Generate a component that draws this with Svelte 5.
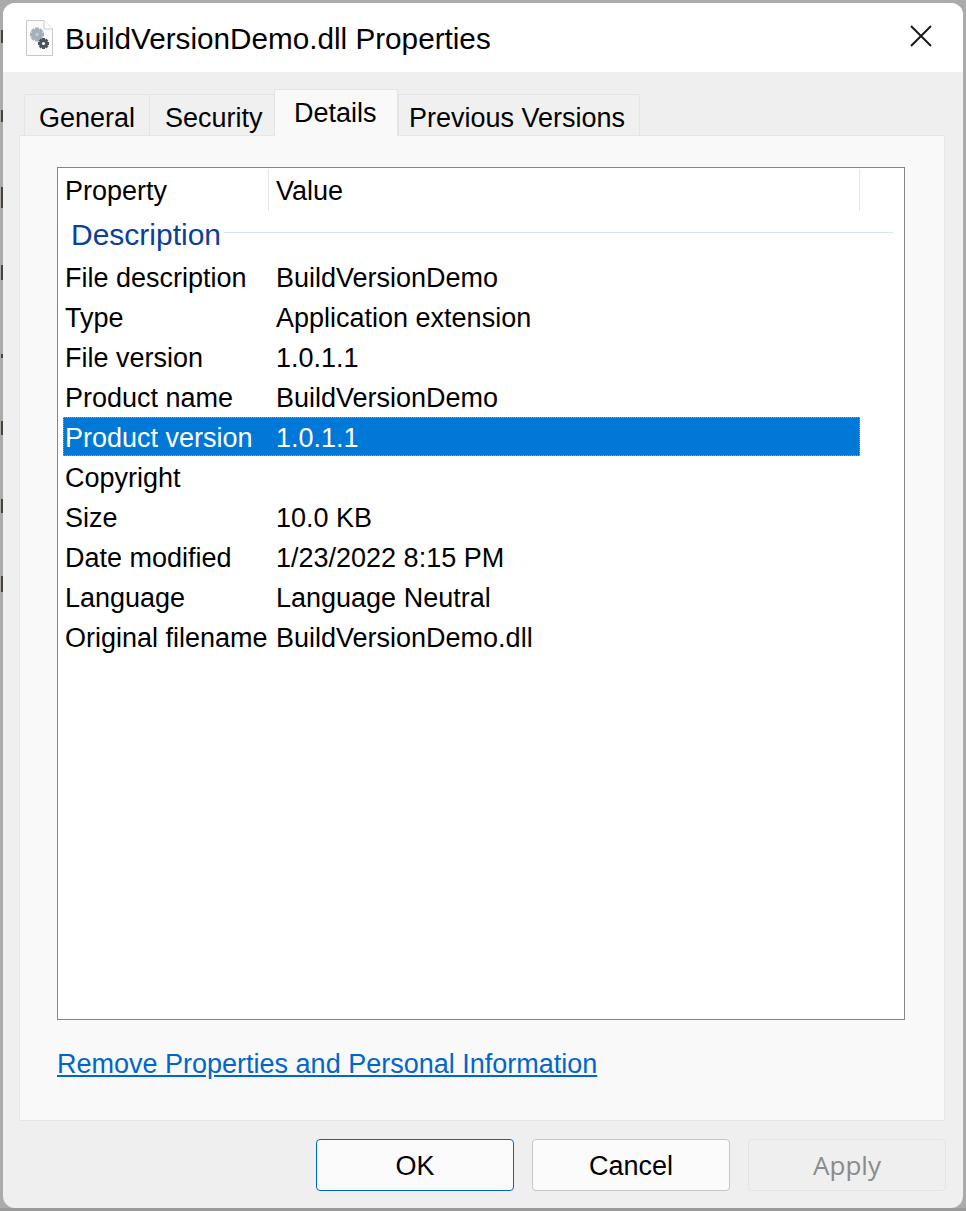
<script>
  const rows = [
    ['File description', 'BuildVersionDemo'],
    ['Type', 'Application extension'],
    ['File version', '1.0.1.1'],
    ['Product name', 'BuildVersionDemo'],
    ['Product version', '1.0.1.1', true],
    ['Copyright', ''],
    ['Size', '10.0 KB'],
    ['Date modified', '1/23/2022 8:15 PM'],
    ['Language', 'Language Neutral'],
    ['Original filename', 'BuildVersionDemo.dll']
  ];
  const tabs = ['General', 'Security', 'Details', 'Previous Versions'];
  const marks = [[30, 13], [110, 12], [187, 21], [265, 15], [354, 4], [421, 14], [499, 14], [576, 16]];
  const teeth = [0, 45, 90, 135];
</script>

<div class="desk">
  {#each marks as m}
    <i class="mark" style="top:{m[0]}px;height:{m[1]}px"></i>
  {/each}
  <div class="win">
    <header class="title">
      <svg class="fileicon" width="27" height="36" viewBox="0 0 27 36">
        <path d="M0.500 0.500H18L26.500 9V35.500H0.500Z" fill="#fbfbfb" stroke="#c8c8c8"/>
        <path d="M18 0.500V9H26.500" fill="#fff" stroke="#c8c8c8"/>
        {#each teeth as a}
          <rect x="9" y="7.500" width="4" height="14" fill="#a5afba" transform="rotate({a} 11 14.500)"/>
        {/each}
        <circle cx="11" cy="14.500" r="5" fill="#a5afba"/>
        <circle cx="11" cy="14.500" r="1.800" fill="#c3cad1"/>
        {#each teeth as a}
          <rect x="16" y="18" width="3" height="11" fill="#4c5259" transform="rotate({a} 17.500 23.500)"/>
        {/each}
        <circle cx="17.500" cy="23.500" r="3.800" fill="#4c5259"/>
        <circle cx="17.500" cy="23.500" r="1.600" fill="#fbfbfb"/>
      </svg>
      <span class="name">BuildVersionDemo.dll Properties</span>
      <svg class="close" width="22" height="22" viewBox="0 0 22 22">
        <path d="M1 1L21 21M21 1L1 21" stroke="#1a1a1a" stroke-width="2" fill="none"/>
      </svg>
    </header>

    <div class="body">
      <div class="tabs">
        {#each tabs as t}
          <div class="tab" class:on={t === 'Details'}>{t}</div>
        {/each}
      </div>

      <section class="panel">
        <div class="list">
          <div class="head">
            <div class="hcell c1">Property</div>
            <div class="hcell c2">Value</div>
          </div>
          <div class="group">
            <span>Description</span>
            <i></i>
          </div>
          {#each rows as r}
            <div class="row" class:sel={r[2]}>
              <div class="c1">{r[0]}</div>
              <div class="c2">{r[1]}</div>
            </div>
          {/each}
        </div>
        <a class="link" href="#top">Remove Properties and Personal Information</a>
      </section>

      <footer class="btns">
        <button class="ok">OK</button>
        <button>Cancel</button>
        <button class="off" disabled>Apply</button>
      </footer>
    </div>
  </div>
</div>

<style>
  :global(body) { margin: 0; background: #ababab; }
  .desk {
    position: relative;
    width: 966px;
    height: 1211px;
    padding: 3px;
    box-sizing: border-box;
    background: linear-gradient(#ababab 1208px, #9a9a9a 1208px);
    font-family: "Liberation Sans", Arial, sans-serif;
    font-size: 27px;
    color: #000;
  }
  .mark {
    position: absolute;
    left: 1px;
    width: 2px;
    background: #4a4438;
  }
  .win {
    height: 100%;
    border-radius: 12px;
    overflow: hidden;
    background: #efefef;
    display: flex;
    flex-direction: column;
  }
  .title {
    height: 69px;
    flex: none;
    background: #fff;
    display: flex;
    align-items: center;
    padding: 0 31px 0 23px;
  }
  .fileicon { flex: none; margin-top: 1px; }
  .name { margin-left: 12px; font-size: 29.700px; flex: 1; position: relative; top: 1px; }
  .close { flex: none; margin-top: -3px; }
  .body { flex: 1; display: flex; flex-direction: column; padding: 0 18px 0 16px; }
  .tabs { display: flex; height: 63px; align-items: flex-end; padding-left: 5px; flex: none; }
  .tab {
    width: 125px;
    height: 41px;
    box-sizing: border-box;
    border: 1px solid #e4e4e4;
    border-bottom: 0;
    border-right: 0;
    line-height: 47px;
    background: #f0f0f0;
    padding-left: 14px;
    white-space: nowrap;
  }
  .tab:nth-child(2) { padding-left: 15px; }
  .tab:last-child { width: 242px; padding-left: 10px; border-right: 1px solid #e4e4e4; }
  .tab.on {
    width: 124px;
    height: 47px;
    background: #f9f9f9;
    line-height: 47px;
    padding-left: 19px;
    border-right: 1px solid #e4e4e4;
    position: relative;
    top: 1px;
    z-index: 1;
  }
  .panel {
    flex: none;
    height: 986px;
    box-sizing: border-box;
    border: 1px solid #e6e6e6;
    background: #f9f9f9;
    padding: 31px 39px 0 37px;
  }
  .list {
    height: 853px;
    box-sizing: border-box;
    border: 1px solid #84868c;
    background: #fff;
    padding-left: 5px;
  }
  .head { display: flex; height: 42px; width: 797px; border-right: 1px solid #e4e4e4; margin-top: 1px; box-sizing: border-box; }
  .hcell { line-height: 44px; }
  .hcell.c1 { width: 206px; padding-left: 2px; box-sizing: border-box; border-right: 1px solid #e4e4e4; }
  .hcell.c2 { padding-left: 7px; }
  .group {
    display: flex;
    align-items: center;
    height: 46px;
    padding: 2px 0 0 8px;
    width: 830px;
    box-sizing: border-box;
    color: #0a3f9e;
    font-size: 30px;
  }
  .group i { flex: 1; height: 1px; background: #d8e1ef; margin: -6px 0 0 3px; }
  .row { display: flex; height: 40px; width: 797px; line-height: 42px; }
  .row .c1 { width: 213px; padding-left: 2px; box-sizing: border-box; white-space: nowrap; }
  .sel {
    background: #0078d7;
    color: #fff;
    height: 39px;
    margin-bottom: 1px;
    outline: 1px dotted #f08a24;
    outline-offset: -1px;
  }
  .link {
    display: inline-block;
    margin-top: 27px;
    color: #0066cc;
    text-decoration: underline;
    line-height: 34px;
  }
  .btns { display: flex; justify-content: flex-end; gap: 18px; padding-top: 18px; margin-right: -1px; }
  button {
    width: 198px;
    height: 52px;
    font: inherit;
    color: #000;
    background: #fbfbfb;
    border: 1px solid #c6c6c6;
    border-radius: 4px;
    padding: 2px 0 0;
  }
  .ok { border: 1.500px solid #0067c0; }
  .off { background: #efefef; border-color: #e3e3e3; color: #8a8a8a; font-family: "Open Sans", sans-serif; font-size: 26px; padding: 0; }
</style>
